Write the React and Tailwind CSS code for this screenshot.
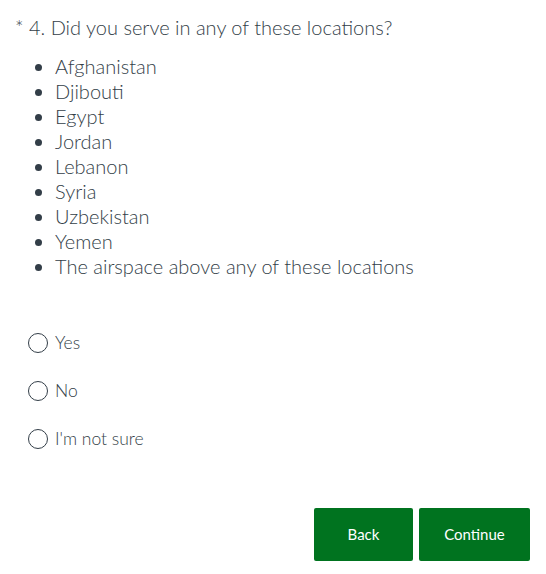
import React, { useState } from 'react';

const locations = ['Afghanistan', 'Djibouti', 'Egypt', 'Jordan', 'Lebanon', 'Syria', 'Uzbekistan', 'Yemen', 'The airspace above any of these locations'];
const choices = ['Yes', 'No', "I'm not sure"];

export default function App() {
    const [answer, setAnswer] = useState(null);

    return (
        <div className="min-h-screen bg-white text-[#333e48] font-['Lato',sans-serif] font-light">
            <div className="px-[15px] pt-[14px]">
                <p className="text-[20px] leading-[26px]">* 4. Did you serve in any of these locations?</p>
                <ul className="mt-[14px] pl-[40px] list-disc text-[20px] leading-[25px]">
                    {locations.map(loc => <li key={loc}>{loc}</li>)}
                </ul>
            </div>
            <div className="mt-[54px] pl-[28px] flex flex-col gap-[28px]">
                {choices.map(choice => (
                    <label key={choice} className="flex items-center gap-[7px] h-[20px] cursor-pointer" onClick={() => setAnswer(choice)}>
                        <span className="w-[20px] h-[20px] rounded-full border border-[#333e48] flex items-center justify-center">
                            {answer === choice && <span className="w-[10px] h-[10px] rounded-full bg-[#333e48]"></span>}
                        </span>
                        <span className="text-[17.5px]">{choice}</span>
                    </label>
                ))}
            </div>
            <div className="mt-[59px] pr-[16px] flex justify-end gap-[6px]">
                <button className="w-[99px] h-[53px] rounded-[2px] bg-[#00731f] text-white text-[15px] font-normal">Back</button>
                <button className="w-[111px] h-[53px] rounded-[2px] bg-[#00731f] text-white text-[15px] font-normal">Continue</button>
            </div>
        </div>
    );
}
